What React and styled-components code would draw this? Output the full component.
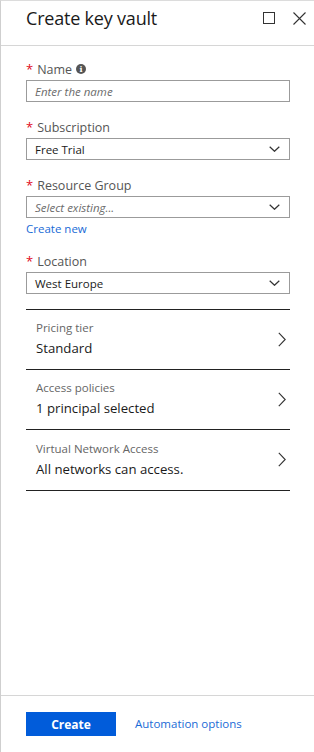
import React from 'react';
import styled, { createGlobalStyle } from 'styled-components';

const GlobalStyle = createGlobalStyle`
  * { box-sizing: border-box; }
  body {
    margin: 0;
    background: #fff;
    font-family: "Open Sans", "Noto Sans", sans-serif;
    color: #222;
  }
`;

const rows = [
  { label: 'Pricing tier', value: 'Standard' },
  { label: 'Access policies', value: '1 principal selected' },
  { label: 'Virtual Network Access', value: 'All networks can access.' },
];

const App = () => (
  <>
    <GlobalStyle />
    <Blade>
      <Header>
        <Title>Create key vault</Title>
        <HeaderIcons>
          <IconButton aria-label="Maximize">
            <svg width="12" height="12" viewBox="0 0 12 12">
              <rect x="0.5" y="0.5" width="11" height="11" fill="none" stroke="#333" strokeWidth="1" />
            </svg>
          </IconButton>
          <IconButton aria-label="Close">
            <svg width="13" height="13" viewBox="0 0 13 13">
              <path d="M0.5 0.5 L12.5 12.5 M12.5 0.5 L0.5 12.5" stroke="#333" strokeWidth="1.1" fill="none" />
            </svg>
          </IconButton>
        </HeaderIcons>
      </Header>

      <Content>
        <Field>
          <Label>
            <Star>*</Star> Name <InfoIcon>i</InfoIcon>
          </Label>
          <TextInput placeholder="Enter the name" />
        </Field>

        <Field>
          <Label><Star>*</Star> Subscription</Label>
          <Select>
            <SelectText>Free Trial</SelectText>
            <ChevronDown />
          </Select>
        </Field>

        <Field $tight>
          <Label><Star>*</Star> Resource Group</Label>
          <Select>
            <SelectText $placeholder>Select existing...</SelectText>
            <ChevronDown />
          </Select>
          <Link>Create new</Link>
        </Field>

        <Field>
          <Label><Star>*</Star> Location</Label>
          <Select>
            <SelectText>West Europe</SelectText>
            <ChevronDown />
          </Select>
        </Field>

        <RowList>
          {rows.map(r => (
            <NavRow key={r.label}>
              <RowText>
                <RowLabel>{r.label}</RowLabel>
                <RowValue>{r.value}</RowValue>
              </RowText>
              <svg width="8" height="15" viewBox="0 0 8 15">
                <path d="M0.8 0.8 L7.2 7.5 L0.8 14.2" stroke="#333" strokeWidth="1.1" fill="none" />
              </svg>
            </NavRow>
          ))}
        </RowList>
      </Content>

      <Footer>
        <PrimaryButton>Create</PrimaryButton>
        <Link as="span" $footer>Automation options</Link>
      </Footer>
    </Blade>
  </>
);

const ChevronDown = () => (
  <svg width="11" height="6" viewBox="0 0 11 6">
    <path d="M0.7 0.7 L5.5 5.3 L10.3 0.7" stroke="#333" strokeWidth="1.2" fill="none" />
  </svg>
);

export default App;

const Blade = styled.div`
  width: 314px;
  height: 752px;
  display: flex;
  flex-direction: column;
  border-left: 1px solid #cfcfcf;
  border-top: 1px solid #dcdcdc;
`;

const Header = styled.div`
  height: 45px;
  flex-shrink: 0;
  display: flex;
  align-items: flex-start;
  justify-content: space-between;
  padding: 5px 8px 0 25px;
  border-bottom: 1px solid #d6d6d6;
`;

const Title = styled.h1`
  margin: 0;
  font-size: 18px;
  font-weight: 400;
  line-height: 24px;
  color: #1a1a1a;
  letter-spacing: -0.2px;
`;

const HeaderIcons = styled.div`
  display: flex;
  align-items: center;
  gap: 18px;
  height: 24px;
`;

const IconButton = styled.span`
  display: flex;
  align-items: center;
`;

const Content = styled.div`
  flex: 1;
  padding: 15px 24px 0 25px;
`;

const Field = styled.div`
  margin-bottom: ${({ $tight }) => ($tight ? '16px' : '17px')};
`;

const Label = styled.div`
  display: flex;
  align-items: center;
  gap: 3px;
  height: 16px;
  margin-bottom: 3px;
  font-size: 12.5px;
  color: #555;
`;

const Star = styled.span`
  color: #e00b1c;
  font-size: 13px;
  margin-right: 1px;
`;

const InfoIcon = styled.span`
  display: inline-flex;
  align-items: center;
  justify-content: center;
  width: 10px;
  height: 10px;
  margin-left: 1px;
  border-radius: 50%;
  background: #555;
  color: #fff;
  font-size: 8px;
  font-weight: 700;
  font-family: "DejaVu Serif", serif;
`;

const TextInput = styled.input`
  display: block;
  width: 100%;
  height: 22px;
  border: 1px solid #9b9b9b;
  padding: 0 8px;
  font-family: "Open Sans", "Noto Sans", sans-serif;
  font-size: 11.5px;
  outline: none;

  &::placeholder {
    font-style: italic;
    color: #6b6b6b;
  }
`;

const Select = styled.div`
  display: flex;
  align-items: center;
  justify-content: space-between;
  height: 22px;
  border: 1px solid #9b9b9b;
  padding: 0 9px 0 8px;
`;

const SelectText = styled.span`
  font-size: 11.5px;
  font-style: ${({ $placeholder }) => ($placeholder ? 'italic' : 'normal')};
  color: ${({ $placeholder }) => ($placeholder ? '#6b6b6b' : '#1a1a1a')};
`;

const Link = styled.a`
  display: block;
  margin-top: ${({ $footer }) => ($footer ? '0' : '3px')};
  line-height: 16px;
  font-size: 11.5px;
  color: #1a6bd6;
  cursor: pointer;
`;

const RowList = styled.div`
  margin-top: -2px;
  border-bottom: 1px solid #222;
`;

const NavRow = styled.div`
  display: flex;
  align-items: center;
  justify-content: space-between;
  height: 60px;
  padding: 10px 4px 11px 10px;
  border-top: 1px solid #222;

  &:last-child {
    height: 61px;
  }
`;

const RowText = styled.div`
  display: flex;
  flex-direction: column;
`;

const RowLabel = styled.span`
  font-size: 11.5px;
  line-height: 16px;
  color: #666;
`;

const RowValue = styled.span`
  margin-top: 2px;
  font-size: 13.2px;
  line-height: 20px;
  color: #1a1a1a;
`;

const Footer = styled.div`
  height: 57px;
  flex-shrink: 0;
  display: flex;
  align-items: flex-start;
  gap: 19px;
  padding: 16px 25px 0;
  border-top: 1px solid #d6d6d6;

  span {
    line-height: 24px;
  }
`;

const PrimaryButton = styled.button`
  width: 90px;
  height: 24px;
  border: none;
  background: #015cda;
  color: #fff;
  font-family: "Open Sans", "Noto Sans", sans-serif;
  font-size: 12px;
  font-weight: 700;
  cursor: pointer;
`;
